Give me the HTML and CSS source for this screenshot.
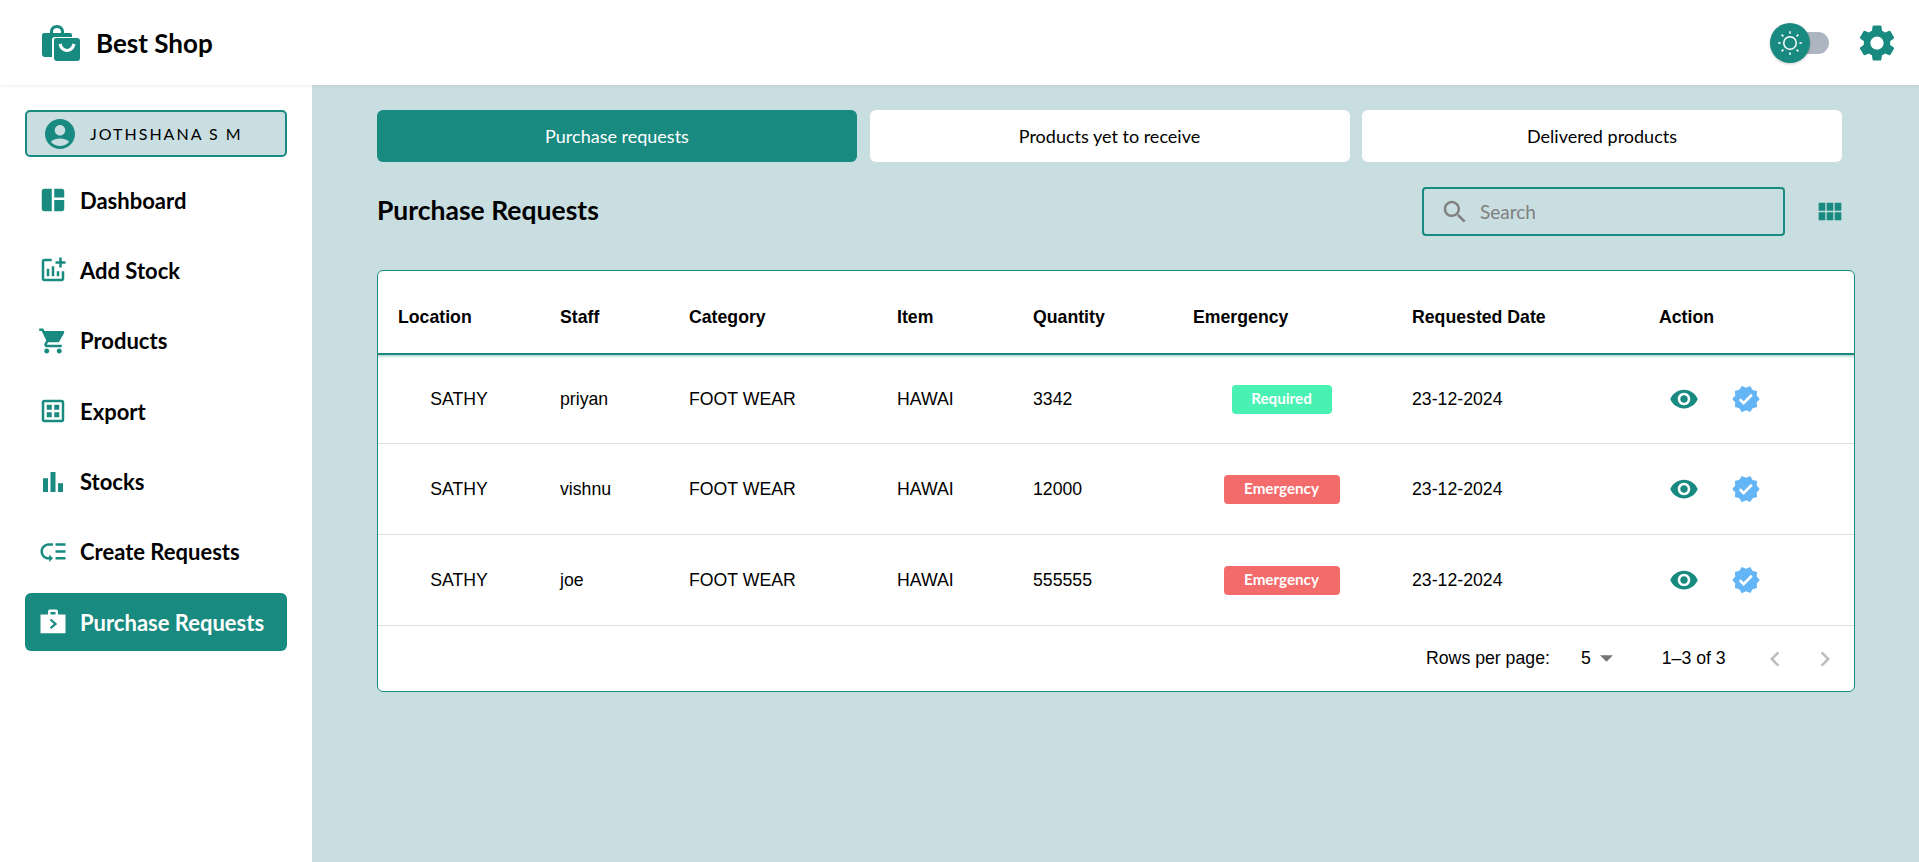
FILE: index.html
```html
<!DOCTYPE html>
<html lang="en">
<head>
  <meta charset="UTF-8" />
  <meta name="viewport" content="width=device-width, initial-scale=1.0" />
  <title>Purchase Requests</title>
  <link rel="stylesheet" href="styles.css">
</head>
<body>
<header class="topbar">
  <div class="brand">
    <svg class="logo" viewBox="0 0 38 36">
      <path class="teal" d="M8 8V6.500C8 2.900 11 0 15 0s7 2.900 7 6.500V8h6a2 2 0 0 1 2 2v2H13a3 3 0 0 0-3 3v17H3a3 3 0 0 1-3-3V10a2 2 0 0 1 2-2zm3 0h8V6.500C19 4.500 17.200 3 15 3s-4 1.500-4 3.500z"/>
      <path class="teal" d="M14 13h21a3 3 0 0 1 3 3v17a3 3 0 0 1-3 3H15a3 3 0 0 1-3-3V15a2 2 0 0 1 2-2z"/>
      <path class="smile" d="M18 19c1 4 4 6.500 7 6.500s6-2.500 7-6.500"/>
    </svg>
    <span class="brand-name">Best Shop</span>
  </div>
  <div class="topbar-right">
    <div class="toggle">
      <span class="toggle-track"></span>
      <span class="toggle-thumb">
        <svg viewBox="0 0 24 24" width="30" height="30">
          <circle class="sun" cx="12" cy="12" r="5"/>
          <path class="sun" d="M12 2.500v2M12 19.500v2M2.500 12h2M19.500 12h2M5.300 5.300l1.400 1.400M17.300 17.300l1.400 1.400M5.300 18.700l1.400-1.400M17.300 6.700l1.400-1.400"/>
        </svg>
      </span>
    </div>
    <svg class="gear teal" viewBox="0 0 24 24"><path d="M19.140 12.940c.04-.3.06-.61.06-.94 0-.32-.02-.64-.07-.94l2.030-1.580c.18-.14.23-.41.12-.61l-1.920-3.320c-.12-.22-.37-.29-.59-.22l-2.390.96c-.5-.38-1.030-.7-1.620-.94l-.36-2.540c-.04-.24-.24-.41-.48-.41h-3.840c-.24 0-.43.17-.47.41l-.36 2.540c-.59.24-1.130.57-1.620.94l-2.390-.96c-.22-.08-.47 0-.59.22L2.740 8.870c-.12.21-.08.47.12.61l2.030 1.580c-.05.3-.09.63-.09.94s.02.64.07.94l-2.030 1.580c-.18.14-.23.41-.12.61l1.920 3.320c.12.22.37.29.59.22l2.390-.96c.5.38 1.030.7 1.620.94l.36 2.540c.05.24.24.41.48.41h3.840c.24 0 .44-.17.47-.41l.36-2.540c.59-.24 1.130-.56 1.620-.94l2.390.96c.22.08.47 0 .59-.22l1.920-3.320c.12-.22.07-.47-.12-.61l-2.010-1.580zM12 15.600c-1.980 0-3.600-1.620-3.600-3.600s1.620-3.600 3.600-3.600 3.600 1.620 3.600 3.600-1.620 3.600-3.600 3.600z"/></svg>
  </div>
</header>

<div class="layout">
  <aside class="sidebar">
    <div class="user-box">
      <svg class="avatar teal" viewBox="0 0 24 24"><path d="M12 2C6.480 2 2 6.480 2 12s4.480 10 10 10 10-4.480 10-10S17.520 2 12 2zm0 4c1.930 0 3.500 1.570 3.500 3.500S13.930 13 12 13s-3.500-1.570-3.500-3.500S10.070 6 12 6zm0 14c-2.030 0-4.430-.82-6.140-2.880C7.550 15.800 9.680 15 12 15s4.450.8 6.140 2.120C16.430 19.180 14.030 20 12 20z"/></svg>
      <span class="user-name">JOTHSHANA S M</span>
    </div>
    <nav class="nav">
      <a class="nav-item">
        <svg class="nav-icon teal" viewBox="0 0 24 24"><path d="M11 21H5c-1.100 0-2-.9-2-2V5c0-1.100.9-2 2-2h6v18zm2 0h6c1.100 0 2-.9 2-2v-7h-8v9zm8-11V5c0-1.100-.9-2-2-2h-6v7h8z"/></svg>
        Dashboard
      </a>
      <a class="nav-item">
        <svg class="nav-icon teal" viewBox="0 0 24 24"><path d="M22 5v2h-3v3h-2V7h-3V5h3V2h2v3h3zm-3 14H5V5h6V3H5c-1.100 0-2 .9-2 2v14c0 1.100.9 2 2 2h14c1.100 0 2-.9 2-2v-6h-2v6zm-4-6v4h2v-4h-2zm-4 4h2V9h-2v8zm-2 0v-6H7v6h2z"/></svg>
        Add Stock
      </a>
      <a class="nav-item">
        <svg class="nav-icon teal" viewBox="0 0 24 24"><path d="M7 18c-1.100 0-1.990.9-1.990 2S5.900 22 7 22s2-.9 2-2-.9-2-2-2zM1 2v2h2l3.600 7.590-1.350 2.450c-.16.28-.25.61-.25.96 0 1.100.9 2 2 2h12v-2H7.420c-.14 0-.25-.11-.25-.25l.03-.12.9-1.630h7.450c.75 0 1.410-.41 1.750-1.030l3.580-6.470c.08-.14.12-.31.12-.48 0-.55-.45-1-1-1H5.210l-.94-2H1zm16 16c-1.100 0-1.990.9-1.990 2s.89 2 1.990 2 2-.9 2-2-.9-2-2-2z"/></svg>
        Products
      </a>
      <a class="nav-item">
        <svg class="nav-icon teal" viewBox="0 0 24 24"><path d="M19 3H5c-1.100 0-2 .9-2 2v14c0 1.100.9 2 2 2h14c1.100 0 2-.9 2-2V5c0-1.100-.9-2-2-2zm0 16H5V5h14v14zM7 7h4v4H7zm6 0h4v4h-4zm-6 6h4v4H7zm6 0h4v4h-4z"/></svg>
        Export
      </a>
      <a class="nav-item">
        <svg class="nav-icon teal" viewBox="0 0 24 24"><path d="M4 9h4v11H4zm12 4h4v7h-4zm-6-9h4v16h-4z"/></svg>
        Stocks
      </a>
      <a class="nav-item">
        <svg class="nav-icon teal" viewBox="0 0 24 24"><path d="M14 5h8v2h-8zm0 5.500h8v2h-8zm0 5.500h8v2h-8zM2 11.500C2 15.080 4.920 18 8.500 18H9v2l3-3-3-3v2h-.5C6.020 16 4 13.980 4 11.500S6.020 7 8.500 7H12V5H8.500C4.920 5 2 7.920 2 11.500z"/></svg>
        Create Requests
      </a>
      <a class="nav-item active">
        <svg class="nav-icon" viewBox="0 0 24 24">
          <path class="white" d="M16 6V3.500C16 2.700 15.300 2 14.500 2h-5C8.700 2 8 2.700 8 3.500V6H2v15h20V6h-6zm-6-2h4v2h-4V4z"/>
          <path class="chevron" d="M10 10l4 3.500-4 3.500"/>
        </svg>
        Purchase Requests
      </a>
    </nav>
  </aside>

  <main class="main">
    <div class="tabs">
      <button class="tab active">Purchase requests</button>
      <button class="tab">Products yet to receive</button>
      <button class="tab">Delivered products</button>
    </div>

    <div class="toolbar">
      <h2 class="page-title">Purchase Requests</h2>
      <div class="toolbar-right">
        <div class="search">
          <svg class="search-icon" viewBox="0 0 24 24"><path d="M15.500 14h-.79l-.28-.27C15.410 12.590 16 11.110 16 9.500 16 5.910 13.090 3 9.500 3S3 5.910 3 9.500 5.910 16 9.500 16c1.610 0 3.090-.59 4.230-1.570l.27.28v.79l5 4.990L20.490 19l-4.990-5zm-6 0C7.010 14 5 11.990 5 9.500S7.010 5 9.500 5 14 7.010 14 9.500 11.990 14 9.500 14z"/></svg>
          <input type="text" placeholder="Search" />
        </div>
        <svg class="view-icon teal" viewBox="3.500 4.500 18 14"><path d="M4 11h5V5H4v6zm0 7h5v-6H4v6zm6 0h5v-6h-5v6zm6 0h5v-6h-5v6zm-6-7h5V5h-5v6zm6-6v6h5V5h-5z"/></svg>
      </div>
    </div>

    <div class="card">
      <table class="table">
        <thead>
          <tr>
            <th class="c-location">Location</th>
            <th class="c-staff">Staff</th>
            <th class="c-category">Category</th>
            <th class="c-item">Item</th>
            <th class="c-qty">Quantity</th>
            <th class="c-emergency">Emergency</th>
            <th class="c-date">Requested Date</th>
            <th class="c-action">Action</th>
          </tr>
        </thead>
        <tbody>
          <tr>
            <td class="center">SATHY</td><td>priyan</td><td>FOOT WEAR</td><td>HAWAI</td><td>3342</td>
            <td class="center"><span class="badge required">Required</span></td>
            <td>23-12-2024</td>
            <td>
              <div class="actions">
                <svg class="act-icon teal" viewBox="0 0 24 24"><path d="M12 4.500C7 4.500 2.730 7.610 1 12c1.730 4.390 6 7.500 11 7.500s9.270-3.110 11-7.500c-1.730-4.390-6-7.500-11-7.500zM12 17c-2.760 0-5-2.240-5-5s2.240-5 5-5 5 2.240 5 5-2.240 5-5 5zm0-8c-1.660 0-3 1.340-3 3s1.340 3 3 3 3-1.340 3-3-1.340-3-3-3z"/></svg>
                <svg class="act-icon blue" viewBox="0 0 24 24"><path d="M23 12l-2.440-2.790.34-3.690-3.610-.82-1.890-3.200L12 2.960 8.600 1.500 6.710 4.690 3.100 5.500l.34 3.700L1 12l2.440 2.790-.34 3.700 3.610.82L8.600 22.500l3.400-1.470 3.400 1.460 1.890-3.190 3.610-.82-.34-3.690L23 12zm-12.910 4.720l-3.800-3.810 1.480-1.480 2.320 2.330 5.850-5.870 1.480 1.480-7.330 7.350z"/></svg>
              </div>
            </td>
          </tr>
          <tr>
            <td class="center">SATHY</td><td>vishnu</td><td>FOOT WEAR</td><td>HAWAI</td><td>12000</td>
            <td class="center"><span class="badge emergency">Emergency</span></td>
            <td>23-12-2024</td>
            <td>
              <div class="actions">
                <svg class="act-icon teal" viewBox="0 0 24 24"><path d="M12 4.500C7 4.500 2.730 7.610 1 12c1.730 4.390 6 7.500 11 7.500s9.270-3.110 11-7.500c-1.730-4.390-6-7.500-11-7.500zM12 17c-2.760 0-5-2.240-5-5s2.240-5 5-5 5 2.240 5 5-2.240 5-5 5zm0-8c-1.660 0-3 1.340-3 3s1.340 3 3 3 3-1.340 3-3-1.340-3-3-3z"/></svg>
                <svg class="act-icon blue" viewBox="0 0 24 24"><path d="M23 12l-2.440-2.790.34-3.690-3.610-.82-1.890-3.200L12 2.960 8.600 1.500 6.710 4.690 3.100 5.500l.34 3.700L1 12l2.440 2.790-.34 3.700 3.610.82L8.600 22.500l3.400-1.470 3.400 1.460 1.890-3.190 3.610-.82-.34-3.690L23 12zm-12.910 4.720l-3.800-3.810 1.480-1.480 2.320 2.330 5.850-5.870 1.480 1.480-7.330 7.350z"/></svg>
              </div>
            </td>
          </tr>
          <tr>
            <td class="center">SATHY</td><td>joe</td><td>FOOT WEAR</td><td>HAWAI</td><td>555555</td>
            <td class="center"><span class="badge emergency">Emergency</span></td>
            <td>23-12-2024</td>
            <td>
              <div class="actions">
                <svg class="act-icon teal" viewBox="0 0 24 24"><path d="M12 4.500C7 4.500 2.730 7.610 1 12c1.730 4.390 6 7.500 11 7.500s9.270-3.110 11-7.500c-1.730-4.390-6-7.500-11-7.500zM12 17c-2.760 0-5-2.240-5-5s2.240-5 5-5 5 2.240 5 5-2.240 5-5 5zm0-8c-1.660 0-3 1.340-3 3s1.340 3 3 3 3-1.340 3-3-1.340-3-3-3z"/></svg>
                <svg class="act-icon blue" viewBox="0 0 24 24"><path d="M23 12l-2.440-2.790.34-3.690-3.610-.82-1.890-3.200L12 2.960 8.600 1.500 6.710 4.690 3.100 5.500l.34 3.700L1 12l2.440 2.790-.34 3.700 3.610.82L8.600 22.500l3.400-1.470 3.400 1.460 1.890-3.190 3.610-.82-.34-3.690L23 12zm-12.910 4.720l-3.800-3.810 1.480-1.480 2.320 2.330 5.850-5.870 1.480 1.480-7.330 7.350z"/></svg>
              </div>
            </td>
          </tr>
        </tbody>
      </table>
      <div class="pagination">
        <span class="rows-label">Rows per page:</span>
        <span class="rows-select">5<svg class="caret" viewBox="0 0 14 7"><path d="M0 0h14L7 7z"/></svg></span>
        <span class="page-range">1–3 of 3</span>
        <svg class="page-arrow prev" viewBox="0 0 24 24"><path d="M15.410 7.410 14 6l-6 6 6 6 1.410-1.410L10.830 12z"/></svg>
        <svg class="page-arrow" viewBox="0 0 24 24"><path d="M10 6 8.590 7.410 13.170 12l-4.580 4.590L10 18l6-6z"/></svg>
      </div>
    </div>
  </main>
</div>
</body>
</html>
```
FILE: styles.css
```css
* {
  box-sizing: border-box;
}
html, body {
  height: 100%;
}
body {
  margin: 0;
  display: flex;
  flex-direction: column;
  overflow: hidden;
  font-family: "Lato", "Liberation Sans", sans-serif;
  color: #000;
  background: #c9dee1;
}
.teal {
  fill: #198a80;
}
.white {
  fill: #fff;
}
.blue {
  fill: #64b5f6;
}

/* top bar */
.topbar {
  position: relative;
  z-index: 2;
  height: 85px;
  flex-shrink: 0;
  background: #fff;
  display: flex;
  align-items: center;
  justify-content: space-between;
  padding: 0 20px 0 42px;
  box-shadow: 0 1px 4px rgba(0, 0, 0, 0.08);
}
.brand {
  display: flex;
  align-items: center;
  gap: 16px;
}
.logo {
  width: 38px;
  height: 36px;
}
.smile {
  fill: none;
  stroke: #fff;
  stroke-width: 3.2;
}
.brand-name {
  font-size: 26px;
  font-weight: 700;
}
.topbar-right {
  display: flex;
  align-items: center;
  gap: 26px;
}
.toggle {
  position: relative;
  width: 59px;
  height: 40px;
  display: flex;
  align-items: center;
}
.toggle-track {
  width: 100%;
  height: 22px;
  border-radius: 11px;
  background: #adb5c0;
}
.toggle-thumb {
  position: absolute;
  left: 0;
  top: 0;
  width: 40px;
  height: 40px;
  border-radius: 50%;
  background: #198a80;
  display: flex;
  align-items: center;
  justify-content: center;
  box-shadow: 0 1px 3px rgba(0, 0, 0, 0.2);
}
.sun {
  fill: none;
  stroke: #fff;
  stroke-width: 1.2;
}
.gear {
  width: 44px;
  height: 44px;
}

/* sidebar */
.layout {
  display: flex;
  flex: 1;
  min-height: 0;
}
.sidebar {
  width: 312px;
  flex-shrink: 0;
  background: #fff;
  padding: 25px 25px 0;
}
.user-box {
  height: 47px;
  display: flex;
  align-items: center;
  gap: 12px;
  padding-left: 18px;
  background: #c9dee1;
  border: 2px solid #198a80;
  border-radius: 5px;
}
.avatar {
  width: 36px;
  height: 36px;
  margin-left: -3px;
}
.user-name {
  font-size: 16px;
  letter-spacing: 2px;
}
.nav {
  display: flex;
  flex-direction: column;
  gap: 12.4px;
  margin-top: 14px;
}
.nav-item {
  height: 58px;
  display: flex;
  align-items: center;
  gap: 12px;
  padding-left: 13px;
  border-radius: 6px;
  font-size: 22px;
  font-weight: 700;
}
.nav-item.active {
  background: #198a80;
  color: #fff;
}
.nav-icon {
  width: 30px;
  height: 30px;
  flex-shrink: 0;
}
.chevron {
  fill: none;
  stroke: #198a80;
  stroke-width: 1.8;
}

/* main */
.main {
  flex: 1;
  padding: 25px 64px 0 65px;
}
.tabs {
  display: flex;
  gap: 12.5px;
  margin-right: 13px;
}
.tab {
  flex: 1;
  height: 52px;
  border: none;
  border-radius: 6px;
  background: #fff;
  font-family: inherit;
  font-size: 18px;
  color: #000;
}
.tab.active {
  background: #198a80;
  color: #fff;
}
.toolbar {
  display: flex;
  align-items: center;
  justify-content: space-between;
  margin: 25px 13px 34px 0;
}
.page-title {
  margin: 0;
  padding-bottom: 4px;
  font-size: 26.5px;
  font-weight: 700;
}
.toolbar-right {
  display: flex;
  align-items: center;
  gap: 33px;
}
.search {
  width: 363px;
  height: 49px;
  display: flex;
  align-items: center;
  gap: 8px;
  padding-left: 16px;
  border: 2px solid #198a80;
  border-radius: 4px;
}
.search-icon {
  width: 30px;
  height: 30px;
  fill: #808080;
  flex-shrink: 0;
}
.search input {
  flex: 1;
  min-width: 0;
  border: none;
  outline: none;
  background: transparent;
  font-family: inherit;
  font-size: 19px;
}
.search input::placeholder {
  color: #808080;
}
.view-icon {
  width: 24px;
  height: 19px;
}

/* table card */
.card {
  background: #fff;
  border: 1px solid #198a80;
  border-radius: 6px;
  overflow: hidden;
  font-family: "Liberation Sans", Arial, sans-serif;
  font-size: 17.7px;
}
.table {
  width: 100%;
  table-layout: fixed;
  border-collapse: separate;
  border-spacing: 0;
}
.table th {
  height: 84px;
  text-align: left;
  padding: 11px 0 0 20px;
  font-weight: 700;
  border-bottom: 2px solid #198a80;
}
.c-location { width: 162px; }
.c-staff { width: 129px; }
.c-category { width: 208px; }
.c-item { width: 136px; }
.c-qty { width: 160px; }
.c-emergency { width: 219px; }
.c-date { width: 247px; }
.table td {
  height: 91px;
  padding: 0 0 0 20px;
  border-bottom: 1px solid #e0e0e0;
}
.table tbody tr:first-child td {
  height: 89px;
  background: linear-gradient(rgba(25, 138, 128, 0.35), rgba(25, 138, 128, 0) 3px);
}
.table td.center {
  text-align: center;
  padding-left: 0;
}
.badge {
  display: inline-flex;
  align-items: center;
  justify-content: center;
  height: 29px;
  margin-right: 2px;
  padding-bottom: 2px;
  border-radius: 4px;
  color: #fff;
  font-family: "Lato", sans-serif;
  font-size: 15.2px;
  font-weight: 700;
}
.required {
  width: 100px;
  background: #49f2b3;
}
.emergency {
  width: 116px;
  background: #f36b6b;
}
.actions {
  display: flex;
  align-items: center;
  gap: 32px;
  padding-left: 10px;
}
.act-icon {
  width: 30px;
  height: 30px;
}
.pagination {
  height: 65px;
  display: flex;
  align-items: center;
  padding-left: 1048px;
}
.rows-select {
  display: flex;
  align-items: center;
  margin-left: 31px;
}
.caret {
  width: 13px;
  height: 7px;
  margin-left: 9px;
  fill: #757575;
}
.page-range {
  margin-left: 49px;
}
.page-arrow {
  width: 30px;
  height: 30px;
  fill: #bdbdbd;
  margin-left: 20px;
}
.page-arrow.prev {
  margin-left: 34px;
}
```
